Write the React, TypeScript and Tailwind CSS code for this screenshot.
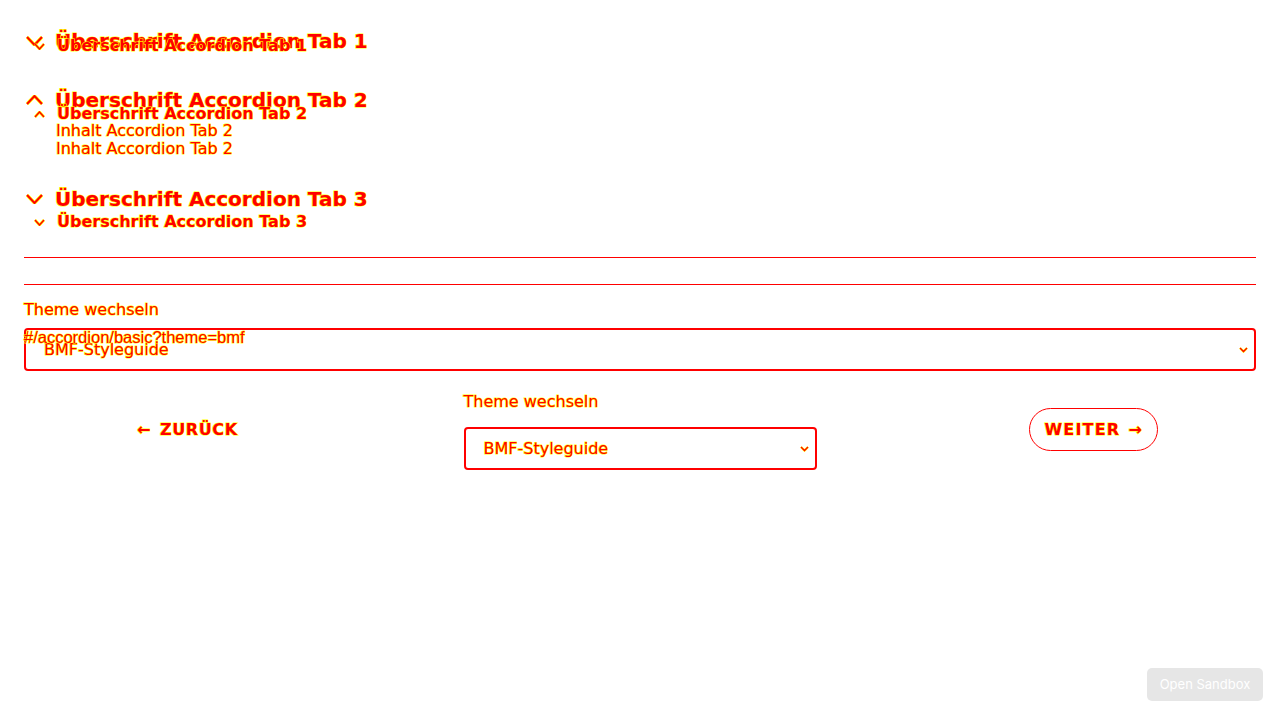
import React from "react";

const glow = "[-webkit-text-stroke:1.2px_#ffff00] [paint-order:stroke_fill]";

function Chevron({ up, size }: { up?: boolean; size: "lg" | "sm" }) {
  const w = size === "lg" ? 17 : 11;
  const h = size === "lg" ? 10 : 7;
  const pts = up ? `1,${h - 1} ${w / 2},1 ${w - 1},${h - 1}` : `1,1 ${w / 2},${h - 1} ${w - 1},1`;
  return (
    <svg width={w} height={h} viewBox={`0 0 ${w} ${h}`} className="shrink-0">
      <polyline points={pts} fill="none" stroke="#ffff00" strokeWidth={size === "lg" ? 3.4 : 2.8} />
      <polyline points={pts} fill="none" stroke="#ff0000" strokeWidth={size === "lg" ? 2 : 1.5} />
    </svg>
  );
}

function SmallChevron() {
  return (
    <svg width="9" height="6" viewBox="0 0 9 6">
      <polyline points="1,1 4.5,4.5 8,1" fill="none" stroke="#ffff00" strokeWidth="2.4" />
      <polyline points="1,1 4.5,4.5 8,1" fill="none" stroke="#ff0000" strokeWidth="1.3" />
    </svg>
  );
}

function LargeHead({ text, up }: { text: string; up?: boolean }) {
  return (
    <div className="flex items-center h-[24px]">
      <div className="w-[31px] pl-[2px] flex items-center">
        <Chevron size="lg" up={up} />
      </div>
      <span className={`text-[20px] leading-[24px] font-bold text-[#ff0000] ${glow}`}>{text}</span>
    </div>
  );
}

function SmallHead({ text, up }: { text: string; up?: boolean }) {
  return (
    <div className="flex items-center h-[20px] pl-[10px]">
      <div className="w-[23px] flex items-center">
        <Chevron size="sm" up={up} />
      </div>
      <span className={`text-[16px] leading-[20px] font-bold text-[#ff0000] ${glow}`}>{text}</span>
    </div>
  );
}

function Select({ className }: { className?: string }) {
  return (
    <div
      className={`h-[43px] border-2 border-[#ff0000] rounded-[4px] flex items-center justify-between pl-[18px] pr-[6px] ${className ?? ""}`}
    >
      <span className={`text-[16px] leading-[18px] text-[#ff0000] ${glow}`}>BMF-Styleguide</span>
      <SmallChevron />
    </div>
  );
}

export default function App() {
  return (
    <div
      className="relative w-[1280px] h-[720px] bg-white overflow-hidden"
      style={{ fontFamily: '"DejaVu Sans", Verdana, sans-serif' }}
    >
      {/* main layer */}
      <div className="px-6 pt-[29px]">
        <LargeHead text="Überschrift Accordion Tab 1" />
        <div className="mt-[35px]">
          <LargeHead text="Überschrift Accordion Tab 2" up />
        </div>
        <div className={`mt-[28px] pl-[32px] text-[16px] leading-[18px] text-[#ff0000] ${glow}`}>
          Inhalt Accordion Tab 2
        </div>
        <div className="mt-[29px]">
          <LargeHead text="Überschrift Accordion Tab 3" />
        </div>
        <div className="mt-[46px] h-px bg-[#ff0000]" />
        <div className="mt-[26px] h-px bg-[#ff0000]" />
        <div className={`mt-[16px] text-[16px] leading-[18px] text-[#ff0000] ${glow}`}>Theme wechseln</div>
        <Select className="mt-[9px]" />

        <div className="mt-[22px] grid grid-cols-[1fr_353px_1fr] items-center">
          <div className="justify-self-start ml-[97px] mb-[3px]">
            <button
              className={`flex items-center gap-[9px] px-4 h-[43px] text-[16px] font-bold tracking-[0.6px] text-[#ff0000] ${glow}`}
            >
              <span>←</span>
              <span>ZURÜCK</span>
            </button>
          </div>
          <div className="flex flex-col">
            <div className={`text-[16px] leading-[18px] text-[#ff0000] ${glow}`}>Theme wechseln</div>
            <Select className="mt-[16px]" />
          </div>
          <div className="justify-self-end mr-[98px] mb-[4px]">
            <button
              className={`flex items-center gap-[8px] h-[43px] px-[14px] rounded-full border-[1.5px] border-[#ff0000] text-[16px] font-bold tracking-[1.2px] text-[#ff0000] ${glow}`}
            >
              <span>WEITER</span>
              <span>→</span>
            </button>
          </div>
        </div>
      </div>

      {/* overlay layer */}
      <div className="absolute top-0 left-0 right-0 px-6 pt-[36px] pointer-events-none">
        <SmallHead text="Überschrift Accordion Tab 1" />
        <div className="mt-[48px]">
          <SmallHead text="Überschrift Accordion Tab 2" up />
        </div>
        <div className={`-mt-[1px] pl-[32px] text-[16px] leading-[16px] text-[#ff0000] ${glow}`}>
          Inhalt Accordion Tab 2
        </div>
        <div className="mt-[73px]">
          <SmallHead text="Überschrift Accordion Tab 3" />
        </div>
        <div
          className={`mt-[97px] text-[16.5px] leading-[16px] text-[#ff0000] ${glow}`}
          style={{ fontFamily: '"Liberation Sans", Arial, sans-serif' }}
        >
          #/accordion/basic?theme=bmf
        </div>
      </div>

      <button
        className="absolute right-[17px] bottom-[19px] w-[116px] h-[33px] rounded-[5px] bg-[#e6e6e6] text-white text-[13px]"
        style={{ fontFamily: 'Inter, "Liberation Sans", sans-serif' }}
      >
        Open Sandbox
      </button>
    </div>
  );
}
